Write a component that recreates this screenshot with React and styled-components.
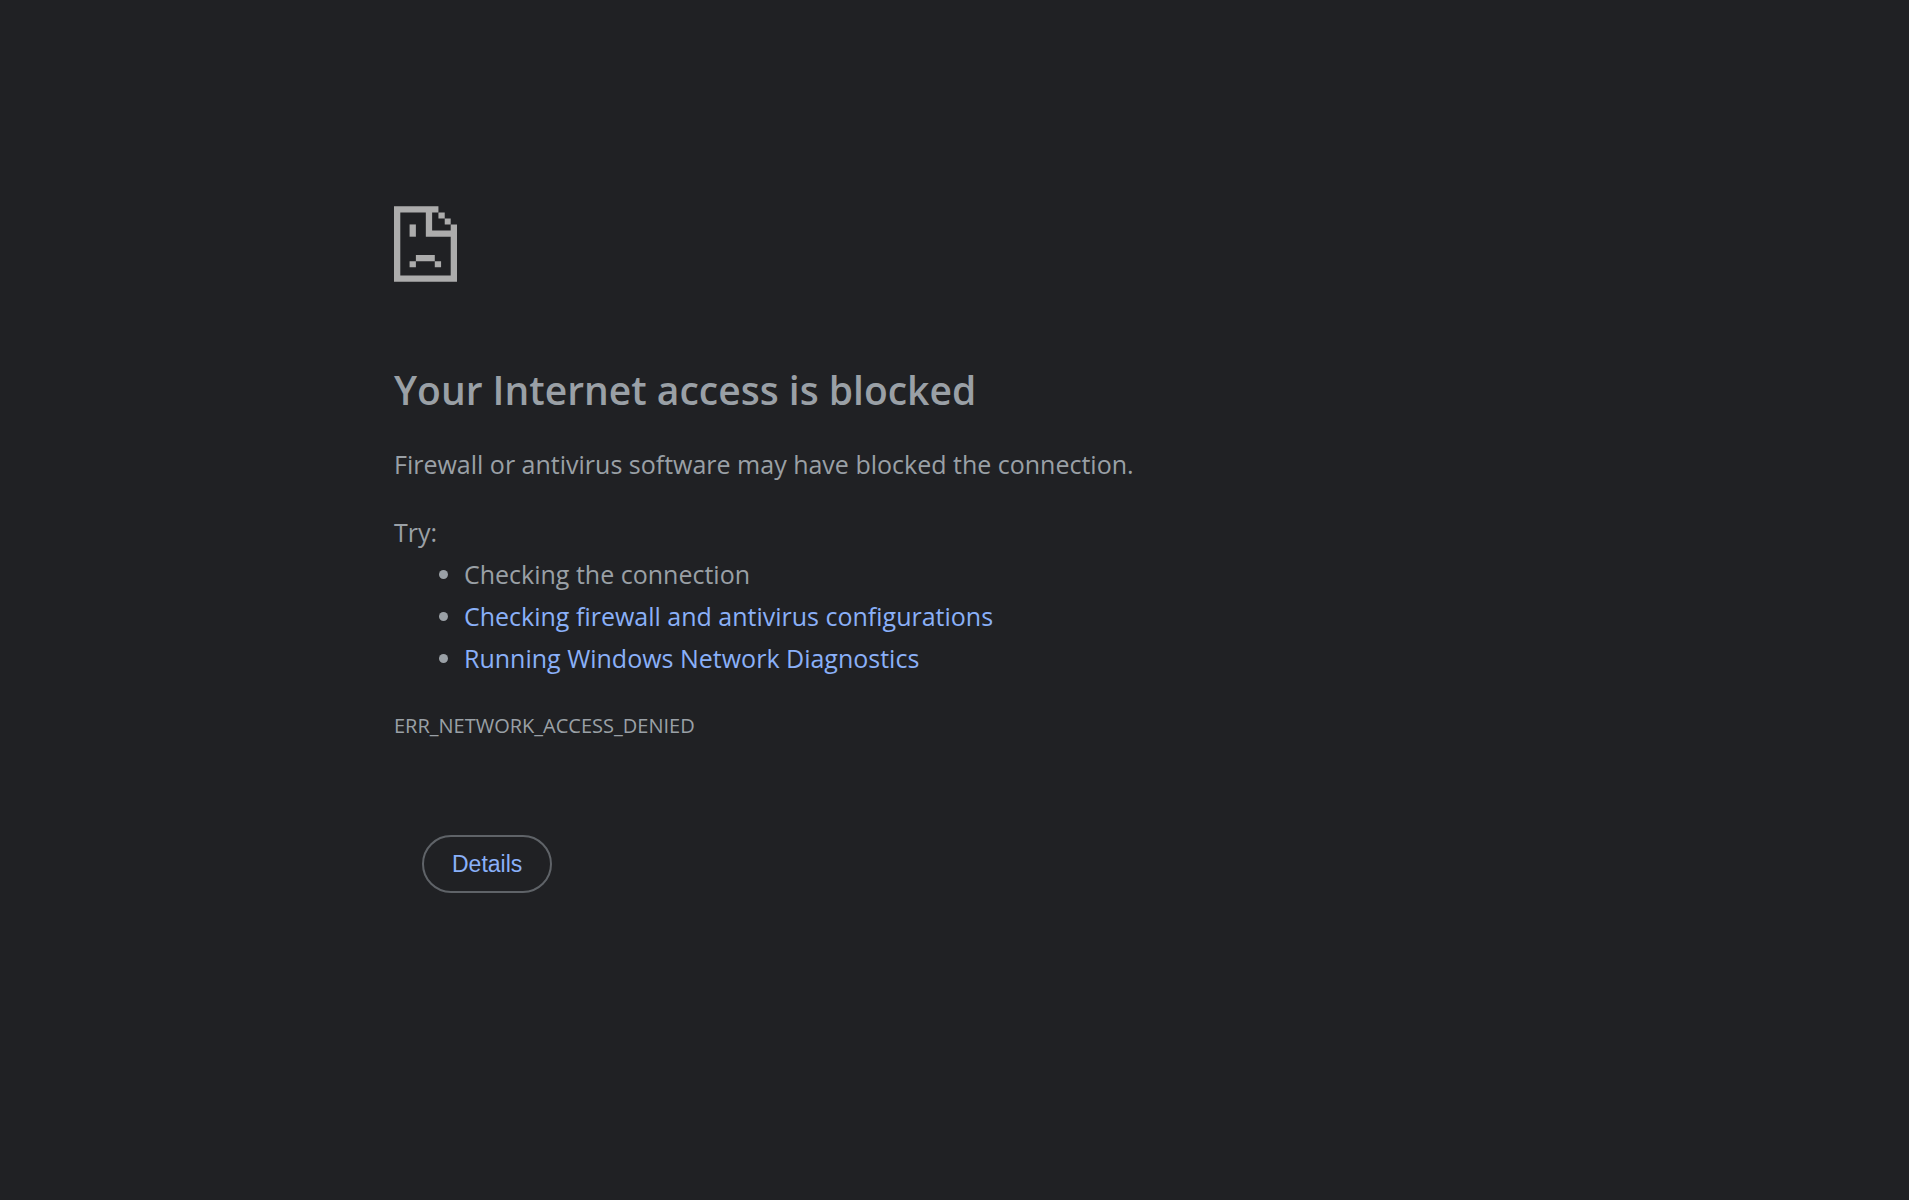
import React from "react";
import styled, { createGlobalStyle } from "styled-components";

const suggestions = [
  { text: "Checking the connection" },
  { text: "Checking firewall and antivirus configurations", href: "#firewall" },
  { text: "Running Windows Network Diagnostics", href: "#diagnostics" },
];

function SadPage() {
  return (
    <Icon viewBox="0 0 190 228" aria-hidden="true">
      <path d="M0 0H134V19H115V73H171V55H190V228H0ZM19 19V209H171V92H96V19Z" />
      <path d="M134 19H153V37H134ZM153 37H171V55H153Z" />
      <path d="M47 55H66V92H47Z" />
      <path d="M66 147H123V166H66ZM47 166H66V184H47ZM123 166H142V184H123Z" />
    </Icon>
  );
}

function App() {
  return (
    <>
      <GlobalStyle />
      <Main>
        <SadPage />
        <Title>Your Internet access is blocked</Title>
        <Text>Firewall or antivirus software may have blocked the connection.</Text>
        <Text>Try:</Text>
        <List>
          {suggestions.map((item) => (
            <li key={item.text}>
              {item.href ? <Link href={item.href}>{item.text}</Link> : item.text}
            </li>
          ))}
        </List>
        <ErrorCode>ERR_NETWORK_ACCESS_DENIED</ErrorCode>
        <Details type="button">Details</Details>
      </Main>
    </>
  );
}
export default App;

const GlobalStyle = createGlobalStyle`
  body {
    margin: 0;
    background-color: #202124;
    color: #9aa0a6;
    font-family: "Segoe UI", "Open Sans", "Noto Sans", sans-serif;
    font-size: 25px;
    line-height: 42px;
  }
`;

const Main = styled.main`
  box-sizing: border-box;
  max-width: 1121px;
  margin: 0 auto;
  padding: 206px 0 48px;
`;

const Icon = styled.svg`
  display: block;
  width: 63px;
  height: 76px;
  margin-bottom: 83px;
  fill: #acacac;
`;

const Title = styled.h1`
  margin: 0 0 28px;
  font-size: 39px;
  font-weight: 600;
  line-height: 50px;
`;

const Text = styled.p`
  margin: 0;

  & + & {
    margin-top: 26px;
  }
`;

const List = styled.ul`
  margin: 0;
  padding: 0 0 0 70px;
`;

const Link = styled.a`
  color: #8ab0f8;
  text-decoration: none;

  &:hover {
    text-decoration: underline;
  }
`;

const ErrorCode = styled.div`
  margin-top: 26px;
  font-size: 20px;
`;

const Details = styled.button`
  display: block;
  height: 58px;
  margin: 88px 0 0 28px;
  padding: 0 28px;
  border: 2px solid #5f6368;
  border-radius: 29px;
  background: transparent;
  color: #8ab0f8;
  font-family: Arial, "Liberation Sans", sans-serif;
  font-size: 23px;
  cursor: pointer;
`;
